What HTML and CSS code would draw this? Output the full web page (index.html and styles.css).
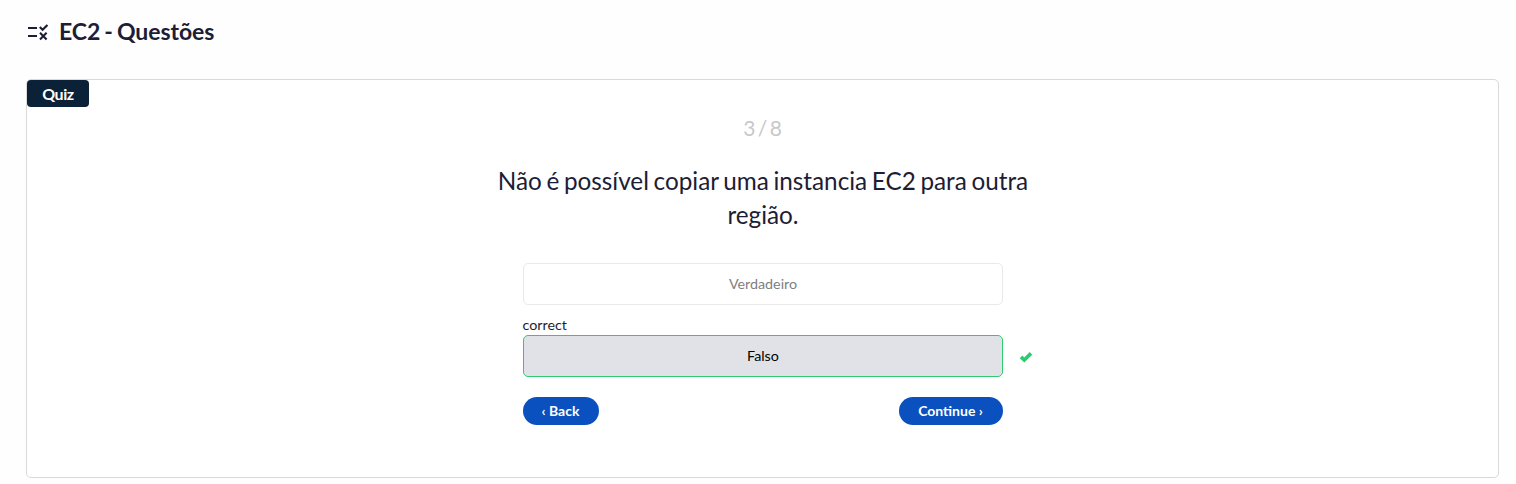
FILE: index.html
```html
<!DOCTYPE html>
<html lang="pt-BR">
<head>
<meta charset="utf-8">
<title>EC2 - Questões</title>
<link rel="stylesheet" href="styles.css">
</head>
<body>
<header class="page-header">
  <svg class="rule-icon" viewBox="0 0 20 18" aria-hidden="true"><path d="M0 5H9M0 13H9M11.8 4L14.6 6.8L19.4 2M12 9.8L18.6 16.4M18.6 9.8L12 16.4"/></svg>
  <h1 class="page-title">EC2 - Questões</h1>
</header>
<main class="quiz">
  <span class="quiz-tag">Quiz</span>
  <section class="quiz-body">
    <p class="counter">3 / 8</p>
    <h2 class="question">Não é possível copiar uma instancia EC2 para outra região.</h2>
    <div class="answers">
      <button class="answer answer-muted">Verdadeiro</button>
      <span class="status">correct</span>
      <div class="answer-row">
        <button class="answer answer-correct">Falso</button>
        <svg class="check" viewBox="0 0 14 12" aria-hidden="true"><path d="M2 5.8L5.3 9L12 2.4"/></svg>
      </div>
      <nav class="actions">
        <button class="pill">‹ Back</button>
        <button class="pill pill-next">Continue ›</button>
      </nav>
    </div>
  </section>
</main>
</body>
</html>
```
FILE: styles.css
```css
* { box-sizing: border-box; }
body { margin: 0; background: #fefefe; color: #1d1d35; font-family: Lato, sans-serif; }
.page-header { display: flex; align-items: center; height: 79px; padding: 0 0 15px 28px; }
.rule-icon { width: 20px; height: 18px; margin-right: 11px; fill: none; stroke: #1d1d35; stroke-width: 2.1; }
.page-title { margin: 0 0 2px; font-size: 23px; line-height: 28px; font-weight: 700; letter-spacing: -0.05px; word-spacing: -1.5px; }
.quiz { display: flex; flex-direction: column; width: 1473px; height: 399px; margin-left: 26px; border: 1px solid #d9d9d9; border-radius: 5px; background: #fff; }
.quiz-tag { align-self: flex-start; width: 62px; height: 27px; border-radius: 4px; background: #0a2138; color: #fff; font-size: 16px; font-weight: 700; letter-spacing: -0.4px; line-height: 28px; text-align: center; }
.quiz-body { display: flex; flex-direction: column; align-items: center; }
.counter { margin: 7px 0 0; color: #c8c8c8; font-size: 21px; line-height: 28px; letter-spacing: -0.2px; word-spacing: -2.5px; }
.question { width: 560px; margin: 22px 0 0; padding-left: 1px; font-size: 24.3px; font-weight: 400; line-height: 34px; word-spacing: -1.6px; text-align: center; }
.answers { display: flex; flex-direction: column; width: 480px; margin-top: 31px; }
.answer { width: 480px; height: 42px; flex: none; padding: 0 0 0 1px; border: 1px solid #e9e9eb; border-radius: 5px; background: #fff; font: 14.3px/20px Lato, sans-serif; }
.answer-muted { color: #808080; }
.status { margin-top: 10px; font-size: 14.3px; line-height: 20px; }
.answer-row { display: flex; align-items: center; }
.answer-correct { border-color: #2ecc71; background: #e1e2e8; color: #000; }
.check { width: 14px; height: 12px; margin: 2px 0 0 16px; flex: none; fill: none; stroke: #2ecc71; stroke-width: 3.7; }
.actions { display: flex; justify-content: space-between; margin-top: 20px; }
.pill { width: 76px; height: 28px; padding: 0; border: 0; border-radius: 14px; background: #0a50be; color: #fff; font: 700 14px/20px Lato, sans-serif; }
.pill-next { width: 104px; }
```
